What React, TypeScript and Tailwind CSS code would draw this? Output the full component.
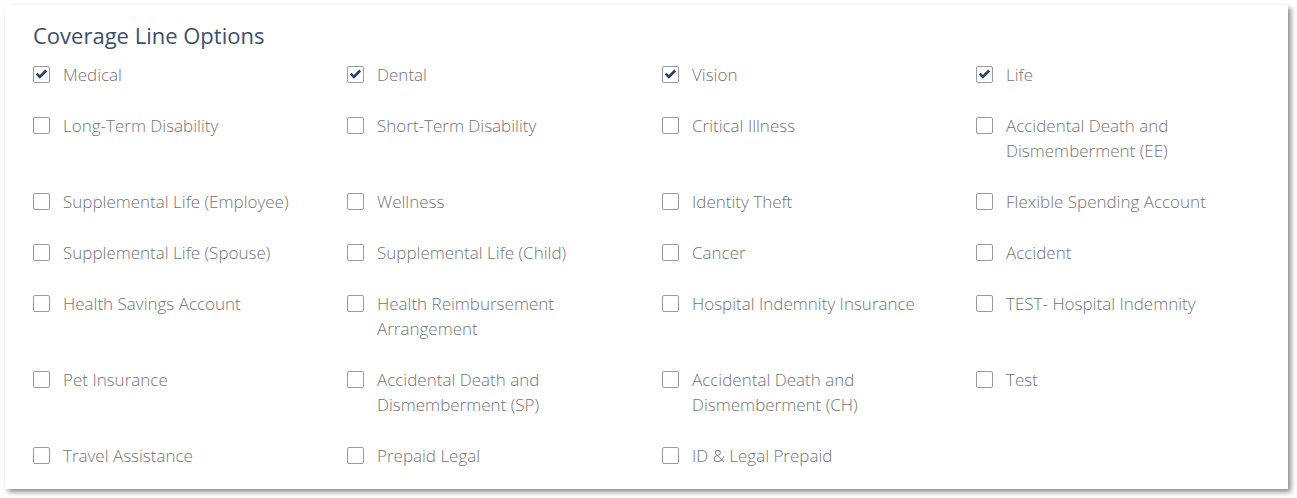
import React from "react";

type Option = { label: string; checked?: boolean };

const options: Option[] = [
  { label: "Medical", checked: true },
  { label: "Dental", checked: true },
  { label: "Vision", checked: true },
  { label: "Life", checked: true },
  { label: "Long-Term Disability" },
  { label: "Short-Term Disability" },
  { label: "Critical Illness" },
  { label: "Accidental Death and Dismemberment (EE)" },
  { label: "Supplemental Life (Employee)" },
  { label: "Wellness" },
  { label: "Identity Theft" },
  { label: "Flexible Spending Account" },
  { label: "Supplemental Life (Spouse)" },
  { label: "Supplemental Life (Child)" },
  { label: "Cancer" },
  { label: "Accident" },
  { label: "Health Savings Account" },
  { label: "Health Reimbursement Arrangement" },
  { label: "Hospital Indemnity Insurance" },
  { label: "TEST- Hospital Indemnity" },
  { label: "Pet Insurance" },
  { label: "Accidental Death and Dismemberment (SP)" },
  { label: "Accidental Death and Dismemberment (CH)" },
  { label: "Test" },
  { label: "Travel Assistance" },
  { label: "Prepaid Legal" },
  { label: "ID & Legal Prepaid" },
];

function CheckBox({ checked }: { checked?: boolean }) {
  return (
    <span className="mt-[4px] flex h-[17px] w-[17px] shrink-0 items-center justify-center rounded-[2px] border border-[#9a9a9a] bg-white">
      {checked && (
        <svg width="13" height="11" viewBox="0 0 13 11">
          <path
            d="M0.8 5.6 L2.6 3.8 L4.8 6 L10.3 0.5 L12.2 2.4 L4.8 9.8 Z"
            fill="#2d405c"
          />
        </svg>
      )}
    </span>
  );
}

export default function App() {
  return (
    <div className="min-h-[498px] bg-white p-[5px] font-['Open_Sans',sans-serif]">
      <div className="h-[484px] w-[1283px] bg-white pl-[28px] pt-[15px] shadow-[3px_3px_5px_rgba(0,0,0,0.45)]">
        <h2 className="text-[22px] leading-[30px] text-[#3b4f6d]">
          Coverage Line Options
        </h2>
        {/* options grid */}
        <div className="mt-[12px] grid grid-cols-[314px_315px_314px_314px] gap-y-[26px]">
          {options.map((o) => (
            <label key={o.label} className="flex items-start gap-[13px]">
              <CheckBox checked={o.checked} />
              <span className="w-[240px] text-[17px] leading-[25px] font-light text-[#747474]">
                {o.label}
              </span>
            </label>
          ))}
        </div>
      </div>
    </div>
  );
}
